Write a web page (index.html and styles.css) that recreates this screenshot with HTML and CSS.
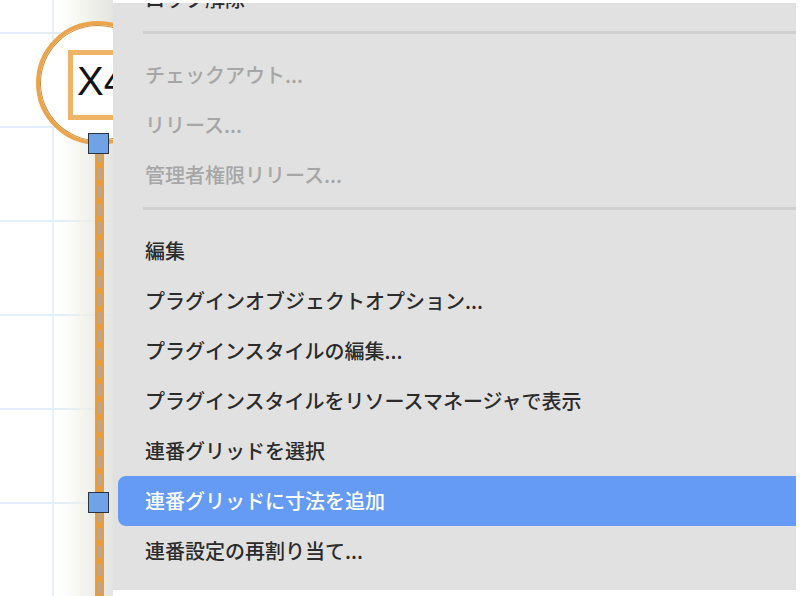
FILE: index.html
```html
<!DOCTYPE html>
<html lang="ja">
  <head>
    <meta charset="UTF-8" />
    <meta name="viewport" content="width=device-width, initial-scale=1.0" />
    <title>連番グリッド メニュー</title>
    <link rel="stylesheet" href="styles.css">
  </head>
  <body>
    <div class="screen">
      <!-- drawing area behind the context menu -->
      <div class="canvas">
        <div class="menu-shadow"></div>
        <div class="grid-line-v"></div>
        <div class="axis-line"></div>
        <div class="bubble"></div>
        <div class="label-box"><span class="label-text">X4</span></div>
        <div class="handle handle-top"></div>
        <div class="handle handle-bottom"></div>
      </div>

      <div class="menu">
        <ul class="menu-list">
          <li class="menu-item">ロック解除</li>
          <li class="menu-sep"></li>
          <li class="menu-item disabled">チェックアウト...</li>
          <li class="menu-item disabled">リリース...</li>
          <li class="menu-item disabled">管理者権限リリース...</li>
          <li class="menu-sep"></li>
          <li class="menu-item">編集</li>
          <li class="menu-item">プラグインオブジェクトオプション...</li>
          <li class="menu-item">プラグインスタイルの編集...</li>
          <li class="menu-item">プラグインスタイルをリソースマネージャで表示</li>
          <li class="menu-item">連番グリッドを選択</li>
          <li class="menu-item active">連番グリッドに寸法を追加</li>
          <li class="menu-item">連番設定の再割り当て...</li>
          <li class="menu-item">オブジェクト情報...</li>
        </ul>
      </div>
    </div>
  </body>
</html>
```

FILE: styles.css
```css
html,
body {
  margin: 0;
  background: #ffffff;
  font-family: "Noto Sans CJK JP", "Noto Sans", sans-serif;
}
ul {
  margin: 0;
  padding: 0;
  list-style: none;
}
.screen {
  display: flex;
  width: 800px;
  height: 596px;
  overflow: hidden;
}

/* ---------- canvas ---------- */
.canvas {
  position: relative;
  width: 113px;
  flex-shrink: 0;
  overflow: hidden;
  background-color: #ffffff;
  background-image: repeating-linear-gradient(
    to bottom,
    transparent 0,
    transparent 32px,
    #e1effa 32px,
    #e1effa 34px,
    transparent 34px,
    transparent 94px
  );
}
.grid-line-v {
  position: absolute;
  left: 52px;
  top: 0;
  bottom: 0;
  width: 2px;
  background: #e4f1fb;
}
.menu-shadow {
  position: absolute;
  left: 60px;
  top: 0;
  bottom: 0;
  width: 53px;
  background: linear-gradient(
    to right,
    rgba(240, 240, 232, 0) 0,
    rgba(240, 240, 232, 0.7) 45%,
    rgba(228, 228, 224, 1) 100%
  );
  border-right: 1px solid #cdcdcd;
}
.axis-line {
  position: absolute;
  left: 95px;
  top: 150px;
  bottom: 0;
  width: 3px;
  border-left: 3px solid #e89c3e;
  border-right: 3px solid #e89c3e;
  background: repeating-linear-gradient(
    to bottom,
    #bda78a 0,
    #bda78a 12px,
    #e89c3e 12px,
    #e89c3e 18px
  );
}
.bubble {
  position: absolute;
  left: 36px;
  top: 21px;
  width: 116px;
  height: 116px;
  border: 4px solid #eaa54c;
  border-radius: 50%;
  box-shadow: inset 0 0 0 1px #c98a3a;
  background: #ffffff;
}
.label-box {
  position: absolute;
  left: 68px;
  top: 50px;
  width: 80px;
  height: 60px;
  border: 5px solid #f0b466;
  background: #ffffff;
}
.label-text {
  position: absolute;
  left: 4px;
  top: 2px;
  font-family: "Liberation Sans", Arial, sans-serif;
  font-size: 40px;
  line-height: 48px;
  color: #111111;
}
.handle {
  position: absolute;
  left: 88px;
  width: 19px;
  height: 19px;
  border: 1.5px solid #2c3340;
  background: #6fa3e6;
}
.handle-top {
  top: 133px;
}
.handle-bottom {
  top: 492px;
}

/* ---------- context menu ---------- */
.menu {
  flex: 1;
  margin: 3px 4px 6px 0;
  background: #e1e1e1;
  overflow: hidden;
}
.menu-list {
  margin-top: -29px;
}
.menu-item {
  height: 50px;
  line-height: 50px;
  padding-left: 32px;
  font-size: 20px;
  font-weight: 500;
  color: #2b2b2b;
  white-space: nowrap;
}
.menu-item.disabled {
  color: #a6a6a6;
}
.menu-item.active {
  margin-left: 5px;
  padding-left: 27px;
  border-radius: 8px 0 0 8px;
  background: #659bf4;
  color: #ffffff;
}
.menu-sep {
  height: 26px;
  padding-top: 7px;
  box-sizing: border-box;
  margin-left: 30px;
}
.menu-sep::before {
  content: "";
  display: block;
  height: 3px;
  background: #d0d0d0;
}
```
